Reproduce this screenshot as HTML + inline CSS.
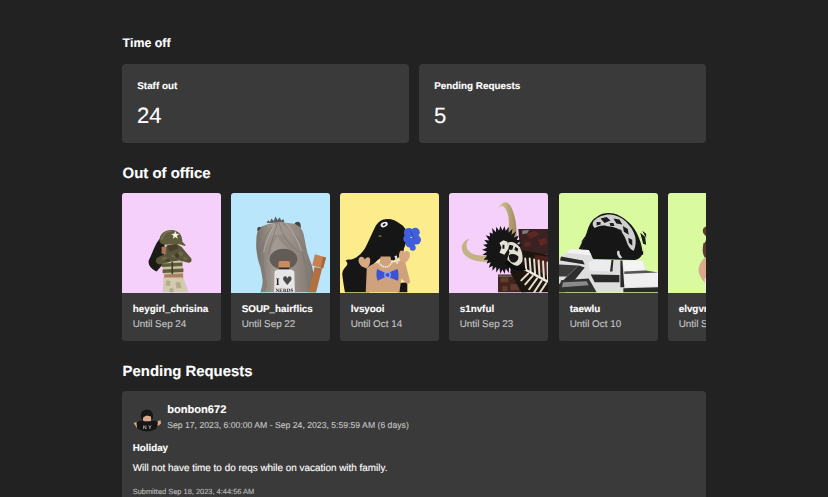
<!DOCTYPE html>
<html><head><meta charset="utf-8">
<style>
*{box-sizing:border-box;margin:0;padding:0}
html,body{width:828px;height:497px;overflow:hidden;background:#222222;font-family:"Liberation Sans",Arial,sans-serif;color:#fff;text-rendering:geometricPrecision;-webkit-text-stroke:0.12px currentColor}
div{line-height:normal}
.abs{position:absolute;white-space:nowrap}
.h1{position:absolute;left:122.600px;font-weight:bold;white-space:nowrap}
.card{position:absolute;background:#3a3a3a;border-radius:4px}
.stat .l{position:absolute;left:15.300px;top:16.69px;font-size:9.850px;font-weight:bold;white-space:nowrap}
.stat .v{position:absolute;left:15px;top:38.90px;font-size:22.100px;white-space:nowrap}
#row{position:absolute;left:122px;top:193px;width:584px;height:149px;overflow:hidden}
.p{position:absolute;top:0;width:99px;height:148px;background:#3a3a3a;border-radius:3px;overflow:hidden}
.p .im{position:absolute;left:0;top:0;width:99px;height:99.500px;overflow:hidden}
.p .im svg{display:block}
.p .n{position:absolute;left:10.700px;top:110.59px;font-size:9.850px;font-weight:bold;white-space:nowrap}
.p .u{position:absolute;left:10.700px;top:125.59px;font-size:9.850px;color:#c4c4c4;white-space:nowrap}
</style></head><body>
<svg width="0" height="0" style="position:absolute"><defs><filter id="bl" x="-5%" y="-5%" width="110%" height="110%"><feGaussianBlur stdDeviation="0.45"/></filter><filter id="bl2"><feGaussianBlur stdDeviation="0.3"/></filter></defs></svg>
<div class="h1" style="top:35.68px;font-size:12.400px">Time off</div>
<div class="card stat" style="left:122px;top:64px;width:287px;height:79px"><div class="l">Staff out</div><div class="v">24</div></div>
<div class="card stat" style="left:419px;top:64px;width:287px;height:79px"><div class="l">Pending Requests</div><div class="v">5</div></div>
<div class="h1" style="top:165.17px;font-size:14.950px">Out of office</div>
<div id="row">
<div class="p" style="left:0px"><div class="im" style="background:#f5d0fb"><svg viewBox="0 0 100 100" width="100%" height="100%"><g filter="url(#bl)">
<path d="M38,46 C33,52 31,60 27,68 C26,73 30,77 35,79 L41,72 L43,58 L43,50 Z" fill="#1b1a18"/>
<rect x="40" y="54" width="6" height="7" fill="#a8775a"/>
<path d="M40,69 L61,68 L62,83 L42,83 Z" fill="#c9c2a2"/>
<path d="M40,71 L61,70 L61,73.5 L40,74.5 Z M41,77 L62,76 L62,79.5 L41,80.5 Z" fill="#615c3c"/>
<rect x="50" y="69" width="1.6" height="14" fill="#3c3a2a"/>
<path d="M43,82 L61.5,81 L62,86 L42,86 Z" fill="#ad7f5e"/>
<path d="M42,85 L62,85 L67,100 L41,100 Z" fill="#d2cbb0"/>
<path d="M45,88 l4,1 l-1,5 l-4,-1z M54,90 l5,0 l1,6 l-5,0z M48,96 l4,0 l0,4 l-4,0z" fill="#b3ab8c"/>
<path d="M45,53 L55,51 L60,54 L70,66 C71,69 69,71 66,70 L58,68 L50,69 L38,72 C34,72 33,67 36,65 L44,61 Z" fill="#5a5537"/>
<path d="M45,53 L55,51 L57,56 L48,59 Z" fill="#47402c"/>
<path d="M58,58 l4,2 l-1,4 l-4,-2z M40,65 l5,-1 l1,3 l-5,1z M62,64 l4,1 l0,3 l-4,-1z M50,62 l4,0 l0,3 l-4,0z" fill="#6b6747"/>
<path d="M55,60 l3,3 l-2,3 l-3,-3z M44,67 l4,0 l0,2 l-4,0z" fill="#403b28"/>
<path d="M38,49 C37,41 43,37 50,37 C57,37 61,42 61,49 L64.5,52.5 C63,54 61,52 58,51.5 L44,52 C41,52 39,51 38,49 Z" fill="#5e5c3a"/>
<path d="M40,47 C41,41 45,38.5 50,38.5" stroke="#77754e" stroke-width="1.5" fill="none"/>
<polygon points="53.8,38.1 54.9,40.9 57.9,41.1 55.5,43.0 56.3,45.9 53.8,44.2 51.3,45.9 52.1,43.0 49.7,41.1 52.7,40.9" fill="#f6f3e6"/>
</g></svg></div><div class="n">heygirl_chrisina</div><div class="u">Until Sep 24</div></div>
<div class="p" style="left:109px"><div class="im" style="background:#b9e6fb"><svg viewBox="0 0 100 100" width="100%" height="100%">
<defs><linearGradient id="hg" x1="0" x2="1" y1="0" y2="0"><stop offset="0" stop-color="#77706a"/><stop offset=".3" stop-color="#a49c94"/><stop offset=".55" stop-color="#9c948c"/><stop offset=".8" stop-color="#8a827b"/><stop offset="1" stop-color="#7a736d"/></linearGradient></defs>
<g filter="url(#bl)">
<path d="M36,30 l1.500,-3 l1.500,2 l2,-3.500 l2,2.500 l2,-4.500 l2,3.500 l2,-2.500 l2,3 l2,-1.500 l1,3.500 Z" fill="#5e5e5e"/>
<path d="M27.200,37.700 C29,35 31,33.500 32.900,32.900 C37,30.500 42,29.700 47.400,29.700 C52,29.500 57,29.800 61.900,30.500 C65,31 68,32.500 69.900,34.500 C72,37 73.500,40 73.900,44.200 C75,49 75.500,53 76.400,57 C77.500,62 79.500,67 81.200,71.500 C82.500,76 83.200,80 83.600,84.400 C84.500,90 85,95 85.200,100 L29.700,100 C31,96 32,92 32,87.600 C31.500,83 30.500,79 29.700,74.700 C28,70 26.800,66 26.400,61.900 C25.500,57 25.300,53 25.600,49 C25.500,45 26,41 27.200,37.700 Z" fill="url(#hg)"/>
<path d="M27,38.500 C25.500,35 27.500,33 30.500,34.500 Z M64,30.800 C66,27.500 70.500,28 70.500,33 C70.500,35 70,36 69.500,34 Z" fill="#46423e"/>
<ellipse cx="53" cy="66.500" rx="14" ry="10.500" fill="#645c57"/>
<path d="M38,62 C40,54 44,48 47.500,44 C50,50 56,56 68,62 C66,56 60,48 53,42 L44,42 C40,48 38,54 38,62 Z" fill="#8e867f" opacity=".7"/>
<path d="M47,30 C44,40 40,50 38,62 M48.500,30 C52,42 58,52 70,60 M46,30 C38,36 32,46 30,60 M52,30 C60,36 68,44 74,56 M33,50 C31,64 33,80 36,96 M72,60 C75,72 78,84 79,98 M29,60 C30,72 33,84 34,98" stroke="#7d756f" stroke-width="1" fill="none" opacity=".8"/>
<path d="M44,31 C40,40 35,48 33,60 M56,31 C62,38 68,48 71,58" stroke="#b5ada5" stroke-width="1.200" fill="none" opacity=".8"/>
<path d="M84.500,74.500 L92,76 L86,100 L78,100 Z" fill="#b06f42"/>
<path d="M84.800,61.500 L96,65 L93,76 L82,73 Z" fill="#c58151"/>
<path d="M93,64.200 L96,65 L93,76 L90.500,75.300 Z" fill="#a5673e"/>
<rect x="48" y="68.500" width="11.500" height="8" rx="2" fill="#cc8b5c"/>
<rect x="48.500" y="75" width="10.500" height="2" fill="#2a2a2a"/>
<path d="M44,79 C46,76.500 50,77 53.500,77 C58,77 62,76.500 64,79 L64.500,100 L43.500,100 Z" fill="#e6e6e6"/>
<text x="45.300" y="92.300" font-family="Liberation Serif,serif" font-weight="bold" font-size="10" fill="#222">I</text>
<text x="51.500" y="93" font-family="DejaVu Sans,sans-serif" font-size="12" fill="#4a4a4a">&#9829;</text>
<text x="45" y="99.500" font-family="Liberation Serif,serif" font-weight="bold" font-size="5.200" fill="#222" textLength="18">NERDS</text>
</g></svg></div><div class="n">SOUP_hairflics</div><div class="u">Until Sep 22</div></div>
<div class="p" style="left:218px"><div class="im" style="background:#fdec8b"><svg viewBox="0 0 100 100" width="100%" height="100%"><g filter="url(#bl)">
<path d="M48,26 C42,26 38,29 35,35 C31,43 28,51 25,56 C21,62 15,67 10,67 C8,67 6.500,67.500 5.600,68.300 C8,70 8,72 6,74 C3,77 2,80 2.400,83 C3,88 4,94 5,100 L30,100 L30,75 L40,66 L54,68 L58,66 C62,62 64.500,60 64.500,56 C67,50 68,45 67.500,41 C67,36 64,32.500 61,31 C57,28 53,26 48,26 Z" fill="#151515"/>
<path d="M58,91 L68,90 L68,100 L58,100 Z" fill="#151515"/>
<path d="M27,76 C30,72 36,70.500 40,70 L41,64 L51,64 L52,70 C56,70 60,69 61,68 L66,70 L71,90 L68,92 L62,86 L60,100 L26,100 Z" fill="#cfa17c"/>
<path d="M19,66 C21,63 24,64 25,67 C27,64 30,64 30.500,67 C31,71 29,74 27,76 L22,74 C19.500,72 18,69 19,66 Z" fill="#d6a884"/>
<path d="M60,60 C61,57 64,57.500 64.500,60 C66,57.500 70,58 70.500,61 C71,65 69,68 66,70 L61,69 C59.500,66 59,63 60,60 Z" fill="#d6a884"/>
<path d="M38,68 C40,73 44,74.500 46,74.500 C49,74.500 52,72 53,68" stroke="#e9e4dc" stroke-width="1.800" fill="none" stroke-dasharray="1.400 .6"/>
<path d="M55,63.500 L57.500,63 L59,71 L57,71.500 Z" fill="#dcdcdc"/>
<path d="M37.500,76.500 L47,81 L58,76.500 C59.500,80 59.500,85 58.500,88.500 L47,84 L38,88.500 C36.500,85 36.500,80 37.500,76.500 Z" fill="#3b52d2"/>
<circle cx="48" cy="82.500" r="2.800" fill="none" stroke="#9aa4e8" stroke-width="1.300"/>
<g fill="#3f5fdc"><circle cx="69.500" cy="40" r="5"/><circle cx="76" cy="39.500" r="4.600"/><circle cx="77" cy="47" r="4.800"/><circle cx="71" cy="50" r="5"/><circle cx="73.500" cy="55" r="3"/><circle cx="67.500" cy="46" r="3.600"/></g>
<path d="M71,38 C73,41 73,44 75,46" stroke="#2c44b4" stroke-width="1" fill="none"/>
<ellipse cx="44.600" cy="31.600" rx="3.800" ry="2.500" fill="#f2f2f2" transform="rotate(-25 44.600 31.600)"/>
<ellipse cx="44.600" cy="31.600" rx="1.700" ry="1" fill="#151515" transform="rotate(-25 44.600 31.600)"/>
<path d="M38.500,43 l3,-1 l.5,2 l-3,.5z" fill="#6d5a2e"/>
</g></svg></div><div class="n">lvsyooi</div><div class="u">Until Oct 14</div></div>
<div class="p" style="left:327px"><div class="im" style="background:#f5d0fb"><svg viewBox="0 0 100 100" width="100%" height="100%">
<defs><linearGradient id="hn" x1="0" x2="1" y1="0" y2="0"><stop offset="0" stop-color="#d8c79c"/><stop offset="1" stop-color="#9f8a5e"/></linearGradient></defs>
<g filter="url(#bl)">
<path d="M70,36 L100,36 L100,62 L72,60 Z" fill="#3b2421"/>
<path d="M78,41 l10,-3 l3,4 l-9,4z M90,47 l8,-2 l1,6 l-7,2z M76,50 l6,-1 l1,4 l-6,1z" fill="#5e2825"/>
<path d="M74,37.500 l7,-.5 l-2,3.500 l-5,1z" fill="#7d7d7d"/>
<path d="M49.500,82 L74,82 L78,100 L49.500,100 Z" fill="#43271f"/>
<path d="M52,85 l8,0 l0,5 l-8,0z M62,92 l9,0 l0,6 l-9,0z M54,94 l5,0 l0,5 l-5,0z" fill="#633a30"/>
<path d="M50,83 l20,0 l0,1.500 l-20,0z" fill="#6b6560"/>
<path d="M49.200,16.100 C51,12 54,9 57.300,9 C60,9.500 62,12 63.300,15 C65.500,20 66.500,24 67.300,28.200 C68,33 68.300,38 68.300,44 L60.300,44 C60.500,38 60.500,32 60.300,26.200 C60,22 59,19 57.300,16.100 C56,14 54.500,13 53.300,13 C51.500,13.500 50,15 49.200,16.100 Z" fill="url(#hn)"/>
<path d="M21,45.300 C17,47 14,50 13,53.300 C12.500,57 14,60 16,62.400 C19,65.500 23,67.500 28.100,68.400 C33,69.300 38,69.500 45,69.400 L44,63.400 C38,63.400 33,63 28.100,62.400 C24,61.500 21,60 19,57.300 C17.500,55 17.500,52 18,50.300 C18.500,48.500 19.500,46.500 21,45.300 Z" fill="#c4b184"/>
<polygon points="73.7,57.0 70.0,59.0 73.5,62.0 69.2,62.9 72.6,66.9 68.5,67.0 69.6,70.6 65.6,69.5 67.2,74.6 63.7,73.0 64.5,78.8 60.6,74.7 60.4,80.6 57.4,75.9 56.1,81.3 54.0,76.9 51.9,81.3 50.8,75.3 47.8,80.0 47.6,74.3 43.8,78.2 44.2,73.2 40.2,75.3 42.1,69.8 38.0,70.9 39.5,67.1 35.0,67.1 38.7,63.0 33.9,62.1 38.5,59.0 33.5,57.0 38.6,55.1 34.5,52.0 39.1,51.2 35.7,47.2 40.6,47.7 37.2,42.3 41.6,43.6 41.0,39.6 44.3,41.0 43.5,35.2 47.4,39.3 47.7,33.8 50.6,37.8 51.9,33.0 54.0,37.5 56.1,33.3 57.3,38.2 60.3,33.9 60.3,40.0 64.2,35.8 63.1,42.0 67.9,38.5 65.5,44.6 70.5,42.6 68.4,47.1 73.0,46.9 68.7,51.3 74.4,51.8 69.9,55.0" fill="#121212"/>
<path d="M64,56 L100,62 L100,100 L73,100 L62,80 Z" fill="#1a1210"/>
<path d="M86,62 L100,64 L100,84 L90,78 Z" fill="#4a211e"/>
<g stroke="#e4ddd0" stroke-width="2" fill="none" stroke-linecap="round">
<path d="M77,66 L78,77"/><path d="M81.500,66 L82.500,79.500"/><path d="M86,67 L87,82"/><path d="M90.500,68 L91.500,84.500"/><path d="M95,69 L96,87"/><path d="M99.500,70 L100,89"/>
<path d="M80,81 L73,88"/><path d="M84.500,83.500 L77,92"/><path d="M89,86 L81,97"/><path d="M93.500,88.500 L86,100"/><path d="M98,91 L92,100"/>
</g>
<path d="M76,76.500 L100,89.500" stroke="#efe9dd" stroke-width="2.400"/>
<path d="M51,50 L55,47.500 L59,49 L60,56 L56,62 L51,60 L53,55 Z" fill="#e9e4d8"/>
<path d="M59,50 C63,48 68,50 71,54 C74,58 75,64 74,69 C72,73 68,74.500 64,73.500 C61,72 59,69 59,66 L61,60 Z" fill="#e3ded2"/>
<path d="M60.500,62.500 C63,60.500 68,61 70,64 C70.500,67 68,70 65,70 C62,70 60,66 60.500,62.500 Z M61,52 l4,1 l-1,4 l-4,0z M67,54 l3,2 l-1,3 l-3,-2z M54,52 l2,0 l0,4 l-2,0z" fill="#141414"/>
<path d="M57,70 C62,77 70,79 78,77.500 L75,73 C70,75 64,73 60,68 Z" fill="#0e0e0e"/>
</g></svg></div><div class="n">s1nvful</div><div class="u">Until Sep 23</div></div>
<div class="p" style="left:437px"><div class="im" style="background:#dafa9f"><svg viewBox="0 0 100 100" width="100%" height="100%"><g filter="url(#bl)">
<path d="M20,56 l5,-10 l2,2 l-3,10z M22,50 l4,-6 l2,1z M82,40 l5,4 l1,8 l-3,-1z M84,38 l4,3 l0,4z M80,62 l5,-4 l0,4z" fill="#1a1a1a"/>
<path d="M24,58 C25,50 26,44 28,40 C30,32 33,27 38,24 C42,21 46,20 50,20 C57,20 62,23 66.400,26 C72,30 76,35 78.500,40 C82,47 84,54 84.500,60.400 C83,65 80,67 76.500,67.400 L32,66.400 C28,65 25,62 24,58 Z" fill="#141414"/>
<path d="M35,28 C40,23 47,21 52,21.500 C58,22 63,24.500 67.500,28.500 C72,33 75.500,38 77,44 C78,49 77.500,54 75.500,58 C72,57 69.500,53 68,48 C66,42 63,38 59,35.500 C55,33.500 52,34 48,33 C44,32 40,33 36,35 C33.500,33 33.500,30 35,28 Z" fill="#cfcfcf"/>
<path d="M42,25.500 l6,-1.500 l4,3.500 l-6,2.500z M55,25.500 l6,1 l3,5 l-6,-1z M64.500,33 l5,3 l1,6 l-5,-3z M70,45 l4,2 l0,6 l-3.500,-3z M38,29 l4,0 l0,2.500 l-4,1z M51,30 l4,0 l1,3 l-4,0z M60,36 l3,1 l1,4 l-3,-1z" fill="#1c1c1c"/>
<path d="M59,58 C58,61 59,64 62,66 L64,65 C62,63 61,61 61,58 Z" fill="#d8d8d8"/>
<path d="M1,66 L11,56.600 L30,57.200 L35,67.500 L63,67.500 L64,68 L84.500,68 L88,79 L100,80 L100,100 L0,100 L0,67 Z" fill="#dedede"/>
<path d="M11,56.600 L30,57.200 L33,63 L8,60 Z" fill="#f2f2f2"/>
<path d="M35,67.500 L55,67.500 L53,79 L31,78 L30,70 Z" fill="#ececec"/>
<path d="M64,68 L84.500,68 L87,77 L66,79 Z" fill="#f4f4f4"/>
<path d="M66,81 L100,80 L100,94 L66,95 Z" fill="#efefef"/>
<path d="M2,64 L24,68 L26,72 L1,68 Z" fill="#2b2b2b"/>
<path d="M0,72 L20,73 L8,84 L0,84 Z" fill="#3a3a3a"/>
<path d="M20,73 L26,75 L6,100 L0,100 L0,92 Z" fill="#2e2e2e"/>
<path d="M32,82 L61,82.500 L61,90 L36,90 Z" fill="#2a2a2a"/>
<path d="M2,88 L30,86 L38,100 L0,100 Z" fill="#333"/>
<path d="M4,90 L28,89 L30,93 L3,95 Z" fill="#8a8a8a"/>
<path d="M65,96 L100,95 L100,100 L65,100 Z" fill="#2c2c2c"/>
<path d="M53,67.500 L55,67.500 L54,79 L51.500,79 Z M62,68 L64,68 L66,95 L62,95 Z" fill="#2a2a2a"/>
<path d="M66,79 L88,78 L100,80 L66,81.500 Z" fill="#555"/>
</g></svg></div><div class="n">taewlu</div><div class="u">Until Oct 10</div></div>
<div class="p" style="left:546px"><div class="im" style="background:#dafa9f"><svg viewBox="0 0 100 100" width="100%" height="100%"><g filter="url(#bl)">
<path d="M40,44 C34,42 33,34 40,33 L40,66 C36,62 35,52 40,44 Z" fill="#5a3a2e"/>
<path d="M36,50 C34,58 35,64 40,68 L40,50 Z" fill="#5a3a2e"/>
<path d="M40,64 C34,66 30,74 31,80 C33,86 36,90 40,92 Z" fill="#d9a98c"/>
<path d="M37,86 l3,0 l0,14 l-2,0z" fill="#e8e8e8"/>
</g></svg></div><div class="n">elvgvrl</div><div class="u">Until Sep 30</div></div>
</div>
<div class="h1" style="top:363.72px;font-size:14.900px">Pending Requests</div>
<div class="card" style="left:122px;top:391px;width:584px;height:140px">
<svg style="position:absolute;left:8px;top:11px" width="36" height="30" viewBox="130 402 36 30"><g filter="url(#bl2)">
<path d="M133.600,423 L138,421.500 L140,426 L137,428 Z" fill="#d9a98c"/>
<path d="M156,422 L160.500,420 L161,423.500 L157.500,426.500 Z" fill="#d9a98c"/>
<path d="M136.500,422 C140,420.500 145,420.300 147,420.300 C151,420.300 155,420.800 157.800,421.500 L157.500,426.500 C156,430 151,431.200 147,431.200 C143,431.200 139,430 137,427.500 Z" fill="#161616"/>
<rect x="143" y="415" width="8.300" height="6.200" rx="1.500" fill="#d9a98c"/>
<path d="M141,418 C140.500,413 142,410 146.500,409.700 C151,409.500 153.300,412 153,418.500 L151.500,420 L151,416.500 L147,415.500 L143.500,417 L142.500,420 Z" fill="#141414"/>
<text x="143" y="428.600" font-family="Liberation Sans,sans-serif" font-weight="bold" font-size="5" fill="#bdbdbd" textLength="8.500">NY</text>
</g></svg>
<div class="abs" style="left:45.200px;top:13.25px;font-size:11.100px;font-weight:bold">bonbon672</div>
<div class="abs" style="left:45.200px;top:28.95px;font-size:8.670px;color:#c4c4c4">Sep 17, 2023, 6:00:00 AM - Sep 24, 2023, 5:59:59 AM (6 days)</div>
<div class="abs" style="left:10.700px;top:52.33px;font-size:9.800px;font-weight:bold">Holiday</div>
<div class="abs" style="left:10.700px;top:71.62px;font-size:9.920px">Will not have time to do reqs while on vacation with family.</div>
<div class="abs" style="left:10.700px;top:95.96px;font-size:7.450px;color:#bdbdbd">Submitted Sep 18, 2023, 4:44:56 AM</div>
</div>
</body></html>
